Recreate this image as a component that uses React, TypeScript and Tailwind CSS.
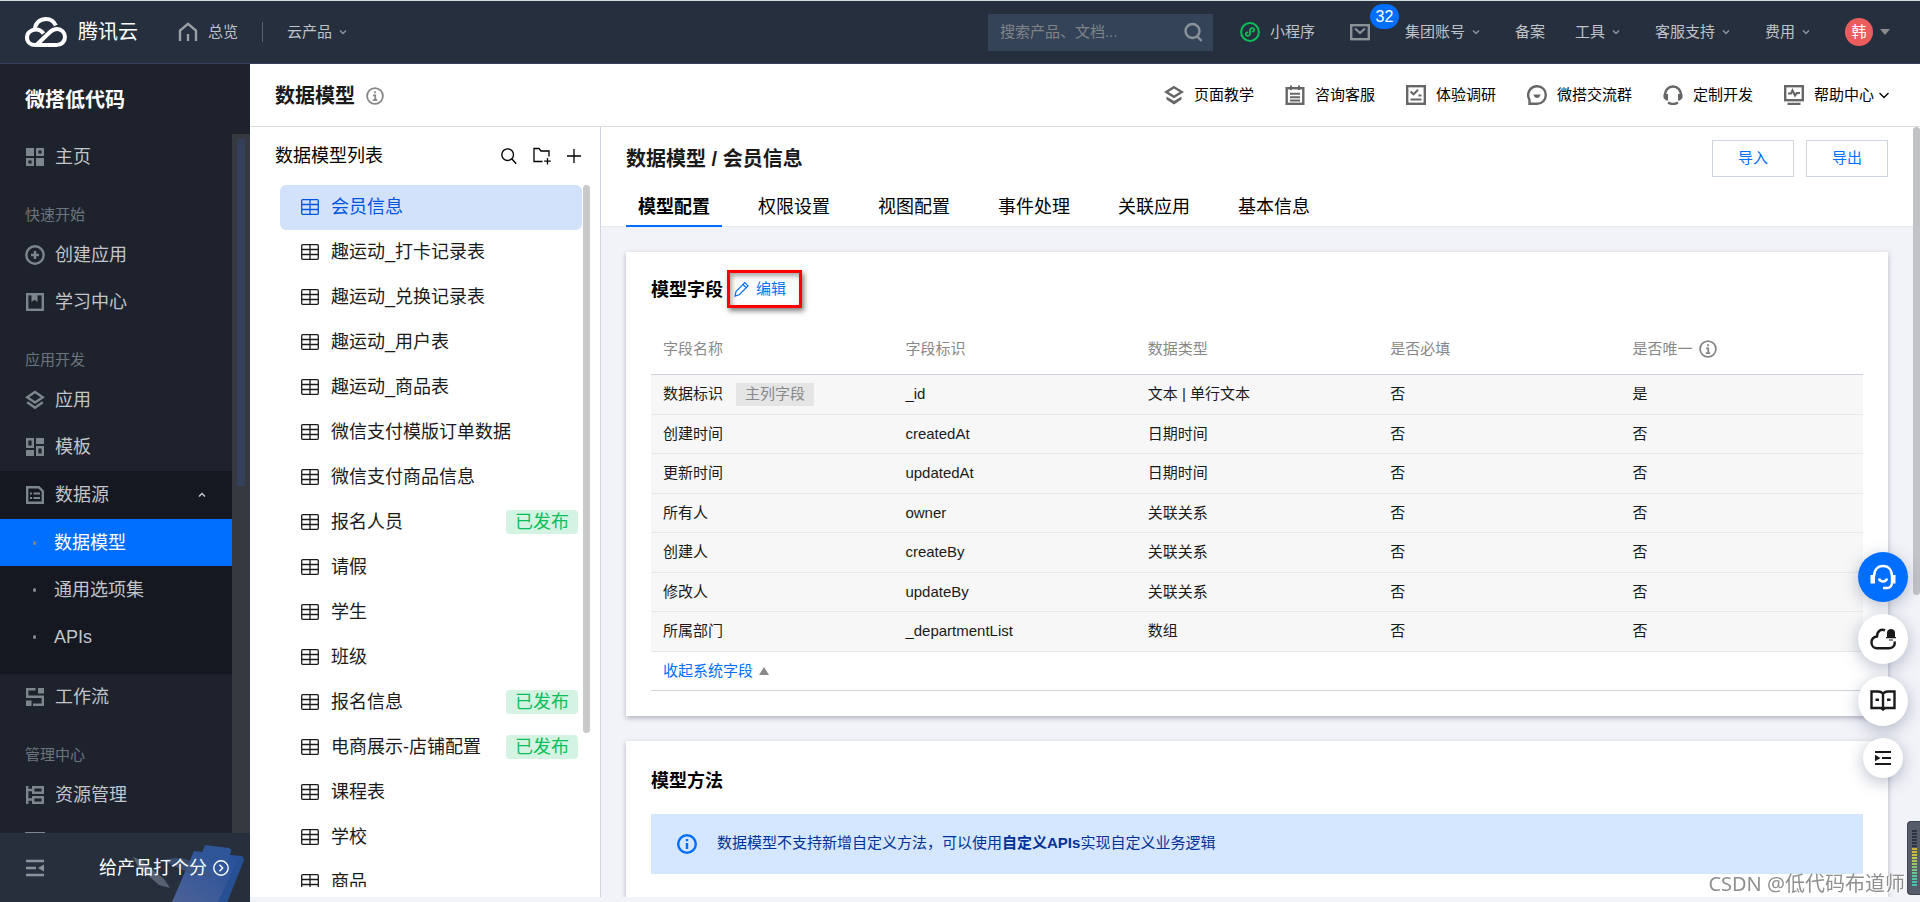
import { useState, type ReactNode } from 'react';

interface IconProps {
  className?: string;
}

interface SvgProps extends IconProps {
  viewBox?: string;
  children: ReactNode;
}

function Svg({ className = "h-5 w-5", viewBox = "0 0 20 20", children }: SvgProps) {
  return (
    <svg
      className={`shrink-0 ${className}`}
      viewBox={viewBox}
      fill="none"
      stroke="currentColor"
      strokeWidth="2.4"
      aria-hidden="true"
    >
      {children}
    </svg>
  );
}

const ChevronDown = ({ className = "h-2 w-2" }: IconProps) => (
  <Svg className={className} viewBox="0 0 8 8">
    <path d="M1 2.5L4 5.5L7 2.5" strokeWidth="1.5" />
  </Svg>
);

const TencentCloudLogo = () => (
  <Svg className="h-[30px] w-[42px]" viewBox="0 0 42 30">
    <g strokeWidth="4">
      <path d="M10 13.5C9.5 6.5 14.5 2 21 2C25.5 2 29 4.5 30.8 8.5" />
      <path d="M18.5 16.5C16.5 13.8 14 12.5 11 12.5C6 12.5 2 16 2 20.5C2 25 5.5 28 10.5 28H31.5C36.5 28 40 24.5 40 20C40 15.5 36.5 12 32 12C29 12 27 13 24.5 15.5L12 27.5" />
    </g>
  </Svg>
);

const HomeIcon = () => (
  <Svg>
    <path d="M2 19V8.5L10 1.8L18 8.5V19" />
    <path d="M10 12V19" />
  </Svg>
);

const SearchIcon = () => (
  <Svg>
    <circle cx="9.5" cy="9" r="7" />
    <path d="M14 14L18.5 19" />
  </Svg>
);

const MiniProgramIcon = () => (
  <Svg>
    <circle cx="10" cy="10" r="8.9" strokeWidth="2" />
    <path
      d="M7.5 10.3C5.8 10.6 5.4 12 6 13C7 14.5 10 14 10 11.8V8.2C10 6 13 5.5 14 7C14.6 8 14.2 9.4 12.5 9.7"
      strokeWidth="1.8"
      strokeLinecap="round"
    />
  </Svg>
);

const MailIcon = () => (
  <Svg>
    <rect x="1.2" y="3.2" width="17.6" height="14" />
    <path d="M5 6.5L10 11L15 6.5" strokeWidth="2.2" />
  </Svg>
);

const InfoIcon = ({ className = "h-[18px] w-[18px]" }: IconProps) => (
  <Svg className={className}>
    <circle cx="10" cy="10" r="8.8" strokeWidth="2" />
    <path d="M10 4.8V7M7.8 9.2H10.3V14.5M7.5 14.5H12.5" strokeWidth="2" />
  </Svg>
);

const StackIcon = () => (
  <Svg>
    <path d="M10 2L17.8 7.3L10 12.6L2.2 7.3Z" />
    <path d="M2.2 12.3L10 17.8L17.8 12.3" />
  </Svg>
);

const TeachIcon = () => (
  <Svg>
    <path d="M10 2.2L17.8 7L10 11.8L2.2 7Z" />
    <path d="M2.5 11.5L10 16L17.5 11.5V14.5L10 19.5L2.5 14.5Z" fill="currentColor" stroke="none" />
  </Svg>
);

const NotepadIcon = () => (
  <Svg>
    <rect x="1.7" y="3.2" width="16.6" height="15.6" />
    <path d="M6 0.5V5M14 0.5V5M5 8.8H15M5 12.2H15M5 15.5H15" strokeWidth="2" />
  </Svg>
);

const SurveyIcon = () => (
  <Svg>
    <rect x="1.2" y="1.2" width="17.6" height="17.6" />
    <path d="M4.5 6.5L7.5 9.3L12 4.8M4.5 14.5H15.5M12.5 10.5H15.5" strokeWidth="2" />
  </Svg>
);

const ChatIcon = () => (
  <Svg>
    <path d="M2.5 18.8V15C-1 8.5 3 1.2 10.2 1.2C15.2 1.2 18.8 5 18.8 10C18.8 15 15 18.8 10.2 18.8Z" />
    <path d="M6.5 9.5H13.5C13 14 7 14 6.5 9.5Z" fill="currentColor" stroke="none" />
  </Svg>
);

const HeadphoneIcon = () => (
  <Svg>
    <path d="M2 10C2 5 5.500 1.500 10 1.500C14.500 1.500 18 5 18 10" />
    <path d="M0.5 9H5V15.5H3L0.5 13ZM19.5 9H15V15.5H17L19.5 13Z" fill="currentColor" stroke="none" />
    <path d="M5 17.5C8 19.3 12 19.3 15 17.5" />
  </Svg>
);

const MonitorIcon = () => (
  <Svg>
    <rect x="1.2" y="1.2" width="17.6" height="14" />
    <path d="M4 8.5H7L8.5 5.5L11 10.5L12.8 8H16M3.5 18.8H16.5" strokeWidth="2.2" />
  </Svg>
);

const GridIcon = () => (
  <Svg>
    <path d="M1 1H9V9H1ZM11 11H19V19H11Z" fill="currentColor" stroke="none" />
    <path d="M12.2 2.2H17.8V7.8H12.2ZM2.2 12.2H7.8V17.8H2.2Z" />
  </Svg>
);

const PlusCircleIcon = () => (
  <Svg>
    <circle cx="10" cy="10" r="8.7" />
    <path d="M10 6V14M6 10H14" />
  </Svg>
);

const BookmarkIcon = () => (
  <Svg>
    <rect x="2.2" y="2.2" width="15.6" height="15.6" />
    <path d="M6.5 2H12.5V10L9.5 7.8L6.5 10Z" fill="currentColor" stroke="none" />
  </Svg>
);

const TemplateIcon = () => (
  <Svg>
    <path d="M2.2 2.2H7.8V9.8H2.2ZM12.2 10.2H17.8V17.8H12.2Z" />
    <path d="M11 1H19V7H11ZM1 13H9V19H1Z" fill="currentColor" stroke="none" />
  </Svg>
);

const DataSourceIcon = () => (
  <Svg>
    <path d="M2.2 2.2H13.8L17.8 6.2V17.8H2.2Z" />
    <path d="M5 8.5H7M5 13H7M8.5 8.5H15M8.5 13H15" strokeWidth="2" />
  </Svg>
);

const FlowIcon = () => (
  <Svg>
    <path d="M1 2.2H10.5M2.2 1.2V9.8H17.8V17.8H8" />
    <path d="M13 1H19V6.5H13ZM1 13.5H6.5V19H1Z" fill="currentColor" stroke="none" />
  </Svg>
);

const ResourceIcon = () => (
  <Svg>
    <path d="M2.2 1V19M2 5H7M2 14.5H7M8.2 2.2H17.8V7.8H8.2ZM8.2 12.2H17.8V17.8H8.2Z" />
  </Svg>
);

const PanelIcon = () => (
  <Svg>
    <path d="M0 1.200H20M2 1V18H18V1" />
  </Svg>
);

const TableIcon = () => (
  <Svg className="h-4 w-[18px]" viewBox="0 0 18 16">
    <rect x="0.7" y="0.7" width="16.6" height="14.6" rx="1" strokeWidth="1.3" />
    <path d="M1 5.5H17M1 10.5H17M9 1V15" strokeWidth="1.3" />
  </Svg>
);

const NewFolderIcon = () => (
  <Svg className="h-[18px] w-[18px]" viewBox="0 0 18 18">
    <path d="M9.5 14.5H1V1.5H6L8 4H16V9.5M14.5 11V17.5M11.2 14.2H17.8" strokeWidth="1.3" />
  </Svg>
);

const PlusIcon = () => (
  <Svg className="h-4 w-4" viewBox="0 0 16 16">
    <path d="M8 1V15M1 8H15" strokeWidth="1.3" />
  </Svg>
);

const PencilIcon = () => (
  <Svg className="h-4 w-4" viewBox="0 0 16 16">
    <path d="M1 15L2 10.5L10.8 1.7L14 4.9L5.2 13.7ZM9 3.5L12.2 6.7" strokeWidth="1.2" />
  </Svg>
);

const CollapseIcon = () => (
  <Svg className="h-[18px] w-5" viewBox="0 0 20 18">
    <path d="M1 2H19M1 9H11M1 16H19" />
    <path d="M19 5.5V12.5L13 9Z" fill="currentColor" stroke="none" />
  </Svg>
);

const topMenu = [
  { label: "集团账号", dropdown: true },
  { label: "备案", dropdown: false },
  { label: "工具", dropdown: true },
  { label: "客服支持", dropdown: true },
  { label: "费用", dropdown: true },
];

function TopBar() {
  return (
    <header className="flex h-16 shrink-0 items-center border-t border-b border-t-[#d3dcdf] border-b-[#36435a] bg-[#262f3e] pr-[30px] pl-[25px] text-[15px] text-[#bfc3c8]">
      <a href="#" className="flex items-center gap-[11px] text-xl text-white">
        <TencentCloudLogo />
        腾讯云
      </a>
      <a href="#" className="ml-10 flex items-center gap-2.5">
        <span className="text-[#98a0a3]">
          <HomeIcon />
        </span>
        总览
      </a>
      <span className="mx-6 h-5 w-px bg-[#59626e]" />
      <button className="flex items-center gap-[7px]">
        云产品
        <ChevronDown className="h-2 w-2 text-[#8b9299]" />
      </button>

      <form className="ml-auto flex h-[37px] w-[225px] items-center bg-[#354358] pr-2.5 pl-3">
        <input
          type="text"
          aria-label="搜索产品、文档"
          placeholder="搜索产品、文档..."
          className="min-w-0 flex-1 bg-transparent placeholder-[#808489] focus:outline-none"
        />
        <button type="button" aria-label="搜索" className="text-[#8b9299]">
          <SearchIcon />
        </button>
      </form>

      <nav className="ml-[27px] flex items-center gap-[30px]">
        <a href="#" className="flex items-center gap-2.5 pr-[5px]">
          <span className="text-[#0abf5b]">
            <MiniProgramIcon />
          </span>
          小程序
        </a>
        <a href="#" aria-label="站内信" className="relative pr-[5px] text-[#8b9299]">
          <MailIcon />
          <span className="absolute -top-[18px] left-5 flex h-[25px] w-[29px] items-center justify-center rounded-full bg-[#006eff] text-base text-white">
            32
          </span>
        </a>
        {topMenu.map((item) =>
          item.dropdown ? (
            <button key={item.label} className="flex items-center gap-[7px] pr-[5px]">
              {item.label}
              <ChevronDown className="h-2 w-2 text-[#8b9299]" />
            </button>
          ) : (
            <a key={item.label} href="#">
              {item.label}
            </a>
          )
        )}
        <button className="flex items-center gap-[7px]">
          <span className="flex h-7 w-7 items-center justify-center rounded-full bg-[#eb5d5d] text-white">
            韩
          </span>
          <svg className="h-[6px] w-[10px]" viewBox="0 0 10 6" fill="#8c8c8c" aria-hidden="true">
            <path d="M0 0H10L5 6Z" />
          </svg>
        </button>
      </nav>
    </header>
  );
}

function SideLabel({ children }: { children: ReactNode }) {
  return (
    <div className="flex h-[51px] items-center pt-4 pl-[25px] text-[15px] text-[#6c757d]">{children}</div>
  );
}

function SideItem({ icon, label }: { icon: ReactNode; label: string }) {
  return (
    <a
      href="#"
      className="flex h-[47px] items-center gap-2.5 pb-0.5 pl-[25px] text-[#c2c5c9] hover:text-white"
    >
      <span className="text-[#7d868c]">{icon}</span>
      {label}
    </a>
  );
}

const dataSourceLinks = ["数据模型", "通用选项集", "APIs"];

function Sidebar() {
  const [active, setActive] = useState("数据模型");

  return (
    <aside className="flex w-[250px] shrink-0 flex-col bg-[#1e222d] text-lg leading-6">
      <h2 className="flex h-[70px] shrink-0 items-center pt-0.5 pl-[25px] text-xl font-bold text-white">
        微搭低代码
      </h2>
      <div className="flex min-h-0 flex-1">
        <nav className="flex-1 overflow-hidden">
          <SideItem icon={<GridIcon />} label="主页" />
          <SideLabel>快速开始</SideLabel>
          <SideItem icon={<PlusCircleIcon />} label="创建应用" />
          <SideItem icon={<BookmarkIcon />} label="学习中心" />
          <SideLabel>应用开发</SideLabel>
          <SideItem icon={<StackIcon />} label="应用" />
          <SideItem icon={<TemplateIcon />} label="模板" />
          <div className="bg-[#151821] pb-3.5">
            <button className="flex h-12 w-full items-center gap-2.5 pr-[26px] pl-[25px] text-[#c2c5c9]">
              <span className="text-[#7d868c]">
                <DataSourceIcon />
              </span>
              数据源
              <ChevronDown className="ml-auto h-2 w-2 rotate-180" />
            </button>
            {dataSourceLinks.map((label) => (
              <a
                key={label}
                href="#"
                onClick={() => setActive(label)}
                className={`flex h-[47px] items-center gap-[18px] pl-[33px] ${
                  active === label ? "bg-[#006eff] text-white" : "text-[#c2c5c9]"
                }`}
              >
                <span className="h-1 w-[3px] rounded-full bg-[#7d868c]" />
                {label}
              </a>
            ))}
          </div>
          <SideItem icon={<FlowIcon />} label="工作流" />
          <SideLabel>管理中心</SideLabel>
          <SideItem icon={<ResourceIcon />} label="资源管理" />
          <SideItem icon={<PanelIcon />} label="" />
        </nav>
        <div className="w-[18px] bg-[#36393f] px-[5px] pt-[5px]">
          <div className="h-[347px] bg-[#35415b]" />
        </div>
      </div>
      <div className="relative flex h-[69px] shrink-0 items-center bg-[#272f3d] pl-[25px]">
        <svg className="absolute right-0 bottom-0 h-[59px] w-[122px]" viewBox="0 0 122 59" aria-hidden="true">
          <defs>
            <linearGradient id="board" x1="0" y1="1" x2="1" y2="0">
              <stop offset="0" stopColor="#4c6196" />
              <stop offset="1" stopColor="#23509c" />
            </linearGradient>
          </defs>
          <path d="M66 8L113 13Q117 14 115 19L99 59H44Z" fill="url(#board)" />
          <path d="M111 14L116 17L99 59H90Z" fill="#274f93" />
          <path d="M77 2L101 5Q104 6 103 9L99 18L72 15Z" fill="#2f5698" />
          <path d="M34 17Q50 13 60 17Q70 28 88 32Q66 36 55 27Q44 22 34 17Z" fill="#3f557d" opacity="0.8" />
          <path d="M5 14L13 17L36 36L42 45L31 42L10 24Z" fill="#566071" />
        </svg>
        <button aria-label="收起菜单" className="text-[#8b9299]">
          <CollapseIcon />
        </button>
        <a href="#" className="relative ml-[54px] flex items-center gap-1.5 text-white">
          给产品打个分
          <Svg className="h-4 w-4" viewBox="0 0 16 16">
            <circle cx="8" cy="8" r="7.2" strokeWidth="1.4" />
            <path d="M6.5 4.8L9.7 8L6.5 11.2" strokeWidth="1.4" />
          </Svg>
        </a>
      </div>
    </aside>
  );
}

const helpLinks = [
  { label: "页面教学", icon: <TeachIcon /> },
  { label: "咨询客服", icon: <NotepadIcon /> },
  { label: "体验调研", icon: <SurveyIcon /> },
  { label: "微搭交流群", icon: <ChatIcon /> },
  { label: "定制开发", icon: <HeadphoneIcon /> },
];

function PageHeader() {
  return (
    <div className="flex h-[63px] shrink-0 items-center border-b border-[#dcdcdc] bg-white pr-[30px] pl-[25px] text-[15px]">
      <h1 className="pt-0.5 text-xl font-bold text-[#1a1a1a]">数据模型</h1>
      <span className="ml-[11px] pt-0.5 text-[#888]">
        <InfoIcon />
      </span>
      <nav className="ml-auto flex items-center gap-[31px]">
        {helpLinks.map((link) => (
          <a key={link.label} href="#" className="flex items-center gap-2.5">
            <span className="text-[#666]">{link.icon}</span>
            {link.label}
          </a>
        ))}
        <button className="flex items-center gap-2.5">
          <span className="text-[#666]">
            <MonitorIcon />
          </span>
          <span className="flex items-center gap-1">
            帮助中心
            <Svg className="h-3 w-3" viewBox="0 0 12 12">
              <path d="M1.5 4L6 8.5L10.5 4" strokeWidth="1.3" />
            </Svg>
          </span>
        </button>
      </nav>
    </div>
  );
}

const models = [
  { name: "会员信息" },
  { name: "趣运动_打卡记录表" },
  { name: "趣运动_兑换记录表" },
  { name: "趣运动_用户表" },
  { name: "趣运动_商品表" },
  { name: "微信支付模版订单数据" },
  { name: "微信支付商品信息" },
  { name: "报名人员", published: true },
  { name: "请假" },
  { name: "学生" },
  { name: "班级" },
  { name: "报名信息", published: true },
  { name: "电商展示-店铺配置", published: true },
  { name: "课程表" },
  { name: "学校" },
  { name: "商品" },
];

function ModelList() {
  const [selected, setSelected] = useState("会员信息");

  return (
    <section className="flex w-[351px] shrink-0 flex-col border-r border-[#cfd5de] bg-white pb-2.5 text-lg leading-6">
      <div className="flex h-[58px] shrink-0 items-center gap-[15px] pr-[18px] pl-[25px]">
        <h2 className="mr-auto">数据模型列表</h2>
        <button aria-label="搜索模型">
          <Svg className="h-[18px] w-[18px]">
            <circle cx="8.5" cy="8.5" r="6.5" strokeWidth="1.5" />
            <path d="M13 13L18 18.5" strokeWidth="1.6" />
          </Svg>
        </button>
        <button aria-label="新建文件夹">
          <NewFolderIcon />
        </button>
        <button aria-label="新建模型">
          <PlusIcon />
        </button>
      </div>
      <div className="flex min-h-0 flex-1 pr-2.5 pl-[30px]">
        <ul className="flex-1 overflow-hidden">
          {models.map((model) => (
            <li key={model.name}>
              <button
                onClick={() => setSelected(model.name)}
                className={`flex h-[45px] w-full items-center gap-3 rounded-md pr-1 pb-0.5 pl-[21px] ${
                  selected === model.name ? "bg-[#d3e2fb] text-[#0055e0]" : "text-[#1a1a1a]"
                }`}
              >
                <TableIcon />
                {model.name}
                {model.published && (
                  <span className="ml-auto flex h-6 items-center rounded bg-[#d5f3e2] px-[9px] text-[#0abf5b]">
                    已发布
                  </span>
                )}
              </button>
            </li>
          ))}
        </ul>
        <div className="ml-px h-[548px] w-[7px] rounded-full bg-[#c9c9c9]" />
      </div>
    </section>
  );
}

const tabs = ["模型配置", "权限设置", "视图配置", "事件处理", "关联应用", "基本信息"];

const fields = [
  { name: "数据标识", primary: true, id: "_id", type: "文本 | 单行文本", required: "否", unique: "是" },
  { name: "创建时间", id: "createdAt", type: "日期时间", required: "否", unique: "否" },
  { name: "更新时间", id: "updatedAt", type: "日期时间", required: "否", unique: "否" },
  { name: "所有人", id: "owner", type: "关联关系", required: "否", unique: "否" },
  { name: "创建人", id: "createBy", type: "关联关系", required: "否", unique: "否" },
  { name: "修改人", id: "updateBy", type: "关联关系", required: "否", unique: "否" },
  { name: "所属部门", id: "_departmentList", type: "数组", required: "否", unique: "否" },
];

function FieldTable() {
  return (
    <table className="w-full table-fixed border-b border-[#cfd5de] text-left text-[15px] leading-5">
      <thead>
        <tr className="h-[49px] border-b border-[#cfd5de] text-[#888]">
          <th className="pl-3 font-normal">字段名称</th>
          <th className="pl-3 font-normal">字段标识</th>
          <th className="pl-3 font-normal">数据类型</th>
          <th className="pl-3 font-normal">是否必填</th>
          <th className="pl-3 font-normal">
            <span className="flex items-center gap-1.5">
              是否唯一
              <InfoIcon />
            </span>
          </th>
        </tr>
      </thead>
      <tbody className="text-[#1a1a1a]">
        {fields.map((field) => (
          <tr key={field.id} className="border-b border-[#e5e8ed] bg-[#f7f7f7] odd:h-10 even:h-[39px]">
            <td className="pl-3">
              <span className="flex items-center gap-[13px]">
                {field.name}
                {field.primary && (
                  <span className="flex h-[23px] items-center bg-[#e5e5e5] px-[9px] text-[#888]">主列字段</span>
                )}
              </span>
            </td>
            <td className="pl-3">{field.id}</td>
            <td className="pl-3">{field.type}</td>
            <td className="pl-3">{field.required}</td>
            <td className="pl-3">{field.unique}</td>
          </tr>
        ))}
      </tbody>
      <tfoot>
        <tr className="h-[39px]">
          <td colSpan={5} className="pl-3">
            <button className="flex items-center gap-1.5 text-[#006eff]">
              收起系统字段
              <svg className="h-2 w-2.5" viewBox="0 0 10 8" fill="#888" aria-hidden="true">
                <path d="M5 0L10 8H0Z" />
              </svg>
            </button>
          </td>
        </tr>
      </tfoot>
    </table>
  );
}

function ModelDetail() {
  const [tab, setTab] = useState("模型配置");

  return (
    <section className="relative flex min-w-0 flex-1 flex-col overflow-hidden">
      <div className="shrink-0 border-b border-[#e5e8ed] bg-white pr-8 pl-[25px]">
        <div className="flex h-[62px] items-center justify-between">
          <h2 className="pt-0.5 text-xl font-bold text-[#1a1a1a]">数据模型 / 会员信息</h2>
          <div className="flex gap-3 text-[15px] text-[#006eff]">
            <button className="h-[37px] w-[82px] border border-[#cfd5de]">导入</button>
            <button className="h-[37px] w-[82px] border border-[#cfd5de]">导出</button>
          </div>
        </div>
        <div role="tablist" className="-mb-px flex gap-6 text-lg leading-6">
          {tabs.map((name) => (
            <button
              key={name}
              role="tab"
              aria-selected={tab === name}
              onClick={() => setTab(name)}
              className={`h-[38px] border-b-2 px-3 ${
                tab === name ? "border-[#006eff] font-bold" : "border-transparent"
              }`}
            >
              {name}
            </button>
          ))}
        </div>
      </div>

      <div className="flex min-h-0 flex-1 flex-col gap-[25px] overflow-hidden pt-[25px] pr-8 pl-[25px]">
        <div className="shrink-0 bg-white px-[25px] pb-[25px] shadow-[0_2px_5px_rgba(54,58,80,0.35)]">
          <div className="flex items-center gap-1 pt-[18px] pb-[17px]">
            <h3 className="pt-0.5 text-lg leading-6 font-bold">模型字段</h3>
            <button className="flex h-[38px] w-[75px] items-center gap-1.5 border-3 border-[#ff0000] pl-1 text-[15px] text-[#006eff] shadow-[2px_3px_5px_rgba(0,0,0,0.5),inset_2px_3px_5px_rgba(0,0,0,0.35)]">
              <PencilIcon />
              编辑
            </button>
          </div>
          <FieldTable />
        </div>

        <div className="flex-1 bg-white px-[25px] shadow-[0_2px_5px_rgba(54,58,80,0.35)]">
          <h3 className="pt-7 pb-[21px] text-lg leading-6 font-bold">模型方法</h3>
          <div className="flex h-[60px] items-center gap-5 bg-[#d5e6ff] pl-[26px] text-[15px] text-[#003298]">
            <Svg className="h-5 w-5 text-[#006eff]">
              <circle cx="10" cy="10" r="8.8" />
              <path d="M10 5V7.2M10 9V15" strokeWidth="2.4" />
            </Svg>
            <p>
              数据模型不支持新增自定义方法，可以使用<strong>自定义APIs</strong>实现自定义业务逻辑
            </p>
          </div>
        </div>
      </div>
      <div className="absolute top-0 right-0 h-[468px] w-[7px] rounded-full bg-[#c1c3c6]" />
    </section>
  );
}

function FloatingTools() {
  return (
    <div className="fixed right-3 bottom-[124px] flex flex-col items-center gap-3 text-[#1a1a1a] *:flex *:items-center *:justify-center *:rounded-full *:shadow-[0_4px_16px_rgba(54,72,110,0.35)]">
      <button aria-label="在线客服" className="h-[50px] w-[50px] bg-[#006eff] text-white">
        <Svg className="h-[26px] w-[26px]" viewBox="0 0 26 26">
          <path d="M4 12.5C4 6 7.5 2 13 2C18.5 2 22 6 22 12.5V18C22 22 20 24 17 24H13" />
          <path d="M0.5 11H5V19.5H0.5ZM21 11H25.5V19.5H21Z" fill="currentColor" stroke="none" />
          <path d="M9 14.5C10 18.5 16 18.5 17 14.5" />
        </Svg>
      </button>
      <button aria-label="云通知" className="h-[50px] w-[50px] bg-white">
        <Svg className="h-[26px] w-[26px]" viewBox="0 0 26 26">
          <path d="M15 4.3C11 2.5 7 5 7 10.5C3.5 11 1.5 13 1.5 16.5C1.5 20 4 22.2 7 22.2H19C23 22.2 25.5 19 24.5 15.5" />
          <path d="M17 11V6.5C17 1.7 25 1.7 25 6.5V11H26V12.3H16V11ZM19 13.5H23V14.5H19Z" fill="currentColor" stroke="none" />
        </Svg>
      </button>
      <button aria-label="文档" className="h-[50px] w-[50px] bg-white">
        <Svg className="h-[26px] w-[26px]" viewBox="0 0 26 26">
          <path d="M13 5.5C11.5 4 10 3.5 8 3.5H1.5V20H11L13 21.5L15 20H24.5V3.5H18C16 3.5 14.5 4 13 5.5ZM13 5.5V21" />
          <path d="M5.5 11.8H9M17 11.8H20.5" />
        </Svg>
      </button>
      <button aria-label="收起工具栏" className="h-10 w-10 bg-white">
        <Svg className="h-4 w-4" viewBox="0 0 16 16">
          <path d="M0 2H16M7 8H16M0 14H16" strokeWidth="2" />
          <path d="M0 4.8V11.2L5.5 8Z" fill="currentColor" stroke="none" />
        </Svg>
      </button>
    </div>
  );
}

// Top segments are unlit, the rest fade from amber to teal.
const meterSegments = [
  "bg-[#30343f]", "bg-[#30343f]", "bg-[#30343f]", "bg-[#30343f]", "bg-[#30343f]", "bg-[#30343f]",
  "bg-[#d0b03c]", "bg-[#cdb83e]", "bg-[#c6c243]", "bg-[#bfca49]", "bg-[#acc957]", "bg-[#9cc766]",
  "bg-[#8bc672]", "bg-[#7bc680]", "bg-[#6cc68f]", "bg-[#5cc69c]", "bg-[#50c5a4]", "bg-[#46c4aa]", "bg-[#46c4aa]",
];

function LevelMeter() {
  return (
    <div className="fixed right-0 bottom-[7px] flex h-[74px] w-[13px] flex-col gap-px rounded-l border border-r-0 border-[#3f4450] bg-[#565c6a] pt-2 pl-1">
      {meterSegments.map((color, i) => (
        <span key={i} className={`h-0.5 w-[5px] shrink-0 ${color}`} />
      ))}
    </div>
  );
}

export default function App() {
  return (
    <div className="flex h-screen flex-col overflow-hidden bg-[#f2f3f8] font-['Liberation_Sans','Noto_Sans_CJK_SC',sans-serif] text-black">
      <TopBar />
      <div className="flex min-h-0 flex-1">
        <Sidebar />
        <main className="flex min-w-0 flex-1 flex-col pb-[5px]">
          <PageHeader />
          <div className="flex min-h-0 flex-1">
            <ModelList />
            <ModelDetail />
          </div>
        </main>
      </div>
      <FloatingTools />
      <p className="pointer-events-none fixed right-[15px] bottom-1 font-['Noto_Sans','Noto_Sans_CJK_SC',sans-serif] text-xl leading-7 text-[#8f8f8f] [text-shadow:1px_1px_0_#fff]">
        CSDN @低代码布道师
      </p>
      <LevelMeter />
    </div>
  );
}
